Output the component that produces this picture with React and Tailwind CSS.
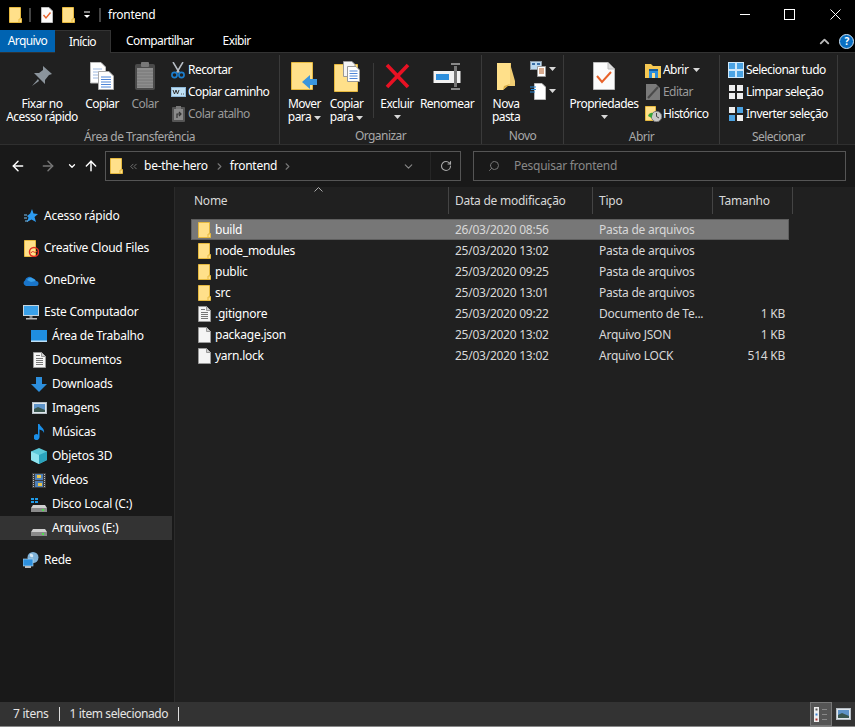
import { ChevronDown, ChevronUp, ChevronRight, ChevronsLeft, RotateCw, Search, ArrowLeft, ArrowRight, ArrowUp } from "lucide-react";

function Folder({ className = "w-[13px] h-[16px]" }) {
  return (
    <svg className={className} viewBox="0 0 13 16" preserveAspectRatio="none">
      <path d="M0.5 0.5H11.5V11.5H12.5V15.5H0.5Z" fill="#ffe08a" stroke="#e6b93f" />
      <path d="M10 15V12H12" fill="none" stroke="#e6b93f" />
    </svg>
  );
}

function Page({ lines }) {
  return (
    <svg className="w-[13px] h-[16px]" viewBox="0 0 13 16">
      <path d="M0.5 0.5H8.5L12.5 4.5V15.5H0.5Z" fill="#f5f5f5" stroke="#9a9a9a" />
      <path d="M8.5 0.5V4.5H12.5" fill="#cfcfcf" stroke="#9a9a9a" />
      {lines && <path d="M3 3.5H7M3 6.5H10M3 8.5H10M3 10.5H10M3 12.5H10" stroke="#777" />}
    </svg>
  );
}

function Caret({ className = "" }) {
  return (
    <svg className={`inline-block w-[7px] h-[4px] ${className}`} viewBox="0 0 7 4">
      <path d="M0 0H7L3.5 4Z" fill="#d8d8d8" />
    </svg>
  );
}

function PinIcon() {
  return (
    <svg width="24" height="24" viewBox="0 0 24 24">
      <path d="M13 2L22 10L19 11L15 16L15 20L4 9L9 9L13 6Z" fill="#8b949c" />
      <path d="M8 15L2 22L9 17Z" fill="#8b949c" />
    </svg>
  );
}

function CopyIcon() {
  return (
    <svg width="24" height="28" viewBox="0 0 24 28">
      <path d="M0.5 0.5H11L15.5 5V21H0.5Z" fill="#fff" stroke="#bbb" />
      <path d="M3 7H12M3 10H12M3 13H12M3 16H12" stroke="#9db8e0" />
      <path d="M8.5 9.5H19L23.5 14V27.5H8.5Z" fill="#fff" stroke="#aaa" />
      <path d="M11 15H21M11 17.5H21M11 20H21M11 22.5H21M11 25H21" stroke="#4f86d8" />
    </svg>
  );
}

function ClipboardIcon() {
  return (
    <svg width="20" height="28" viewBox="0 0 20 28">
      <rect x="0" y="2" width="20" height="26" rx="2" fill="#4a4a4a" />
      <rect x="2" y="6" width="16" height="20" fill="#8d8d8d" />
      <path d="M2 9H18M2 12H18M2 15H18M2 18H18M2 21H18M2 24H18" stroke="#777" />
      <rect x="6" y="0" width="8" height="5" rx="1" fill="#777" />
    </svg>
  );
}

function ScissorsIcon() {
  return (
    <svg width="14" height="17" viewBox="0 0 14 17">
      <path d="M2 0L8.5 11M12 0L5.5 11" stroke="#b8bec6" strokeWidth="1.5" />
      <circle cx="3.5" cy="13" r="2.6" fill="none" stroke="#1b7fd0" strokeWidth="1.6" />
      <circle cx="10.5" cy="13" r="2.6" fill="none" stroke="#1b7fd0" strokeWidth="1.6" />
    </svg>
  );
}

function PathIcon() {
  return (
    <svg width="15" height="10" viewBox="0 0 15 10">
      <rect x="0.5" y="0.5" width="14" height="9" fill="#bfe0f5" stroke="#8fb8d8" />
      <path d="M2 3L3.5 7L5 3L6.5 7L8 3M10 7H10.8M12 7H12.8" fill="none" stroke="#333" />
    </svg>
  );
}

function ShortcutIcon() {
  return (
    <svg width="13" height="16" viewBox="0 0 13 16">
      <rect x="0" y="1" width="13" height="15" rx="1" fill="#555" />
      <rect x="2" y="3" width="9" height="11" fill="#8a8a8a" />
      <rect x="4" y="0" width="5" height="3" fill="#777" />
      <path d="M5 12V8H9M7 6L9 8L7 10" fill="none" stroke="#333" strokeWidth="1.2" />
    </svg>
  );
}

function MoveIcon() {
  return (
    <svg width="27" height="28" viewBox="0 0 27 28">
      <path d="M0.5 0.5H21.5V27.5H0.5Z" fill="#ffe08a" stroke="#e6b93f" />
      <path d="M11 20L19 13V17H26V23H19V27Z" fill="#3a96dd" />
    </svg>
  );
}

function CopyToIcon() {
  return (
    <svg width="26" height="31" viewBox="0 0 26 31">
      <path d="M0.5 3.5H23.5V30.5H0.5Z" fill="#ffe08a" stroke="#e6b93f" />
      <path d="M9.5 0.5H18L21 3.5V15.5H9.5Z" fill="#f5f5f5" stroke="#999" />
      <path d="M13.5 5.5H22L25.5 9V20.5H13.5Z" fill="#fff" stroke="#999" />
      <path d="M15.5 10H23.5M15.5 12.5H23.5M15.5 15H23.5M15.5 17.5H23.5" stroke="#4f86d8" />
    </svg>
  );
}

function DeleteIcon() {
  return (
    <svg width="25" height="26" viewBox="0 0 25 26">
      <path d="M2 2L23 24M23 2L2 24" stroke="#e81123" strokeWidth="3.6" />
    </svg>
  );
}

function RenameIcon() {
  return (
    <svg width="29" height="27" viewBox="0 0 29 27">
      <rect x="0.5" y="8" width="27" height="12" fill="#f2f2f2" />
      <rect x="3" y="11" width="13" height="6" fill="#2d8fdd" />
      <rect x="21" y="3" width="3" height="21" fill="#777" />
      <path d="M18 1H27M18 26H27" stroke="#888" strokeWidth="2" />
    </svg>
  );
}

function NewFolderIcon() {
  return (
    <svg width="19" height="28" viewBox="0 0 19 28">
      <path d="M0 1H14V5L18 19V24H6L0 28Z" fill="#f0cc72" />
      <path d="M0 1H13V22L6 28H0Z" fill="#ffe08a" />
      <path d="M6 28L7 24L13 22" fill="#d8ac45" />
    </svg>
  );
}

function NewItemIcon() {
  return (
    <svg width="16" height="16" viewBox="0 0 16 16">
      <rect x="0.5" y="0.5" width="11" height="8" fill="#bcd9ef" stroke="#8a97a3" />
      <rect x="2" y="2" width="3" height="2" fill="#3a6ea5" />
      <rect x="7" y="2" width="3" height="2" fill="#3a6ea5" />
      <path d="M7.5 5.5H15.5V15.5H7.5Z" fill="#fff" stroke="#999" />
      <path d="M9 8H14M9 10H14M9 12H14" stroke="#b0561f" />
    </svg>
  );
}

function EasyAccessIcon() {
  return (
    <svg width="16" height="17" viewBox="0 0 16 17">
      <path d="M4.5 0.5H12L15.5 4V16.5H4.5Z" fill="#fff" stroke="#bbb" />
      <path d="M0 4H6M1 6.5H6M0 9H5" stroke="#2a8ad8" strokeWidth="1.2" />
    </svg>
  );
}

function PropsIcon() {
  return (
    <svg width="22" height="28" viewBox="0 0 22 28">
      <path d="M0.5 0.5H15L21.5 7V27.5H0.5Z" fill="#fbfbfb" stroke="#bbb" />
      <path d="M15 0.5V7H21.5" fill="#ddd" stroke="#bbb" />
      <path d="M4 14L9 20L18 10" fill="none" stroke="#e8622a" strokeWidth="2" />
    </svg>
  );
}

function PropsSmall() {
  return (
    <svg width="12" height="16" viewBox="0 0 12 16">
      <path d="M0.5 0.5H8L11.5 4V15.5H0.5Z" fill="#fbfbfb" stroke="#bbb" />
      <path d="M2.5 8L5 11L9.5 5.5" fill="none" stroke="#e8622a" strokeWidth="1.4" />
    </svg>
  );
}

function OpenIcon() {
  return (
    <svg width="16" height="15" viewBox="0 0 16 15">
      <path d="M0 1H6L8 3H16V15H0Z" fill="#f4c752" />
      <rect x="4" y="6" width="9" height="9" fill="#2d8fdd" />
      <rect x="4" y="6" width="9" height="2" fill="#155a9b" />
      <rect x="7" y="10" width="3" height="5" fill="#ffe08a" />
    </svg>
  );
}

function EditIcon() {
  return (
    <svg width="14" height="16" viewBox="0 0 14 16">
      <path d="M0 0H10L14 4V16H0Z" fill="#7a7a7a" />
      <path d="M2 14L12 3" stroke="#4a4a4a" strokeWidth="2" />
    </svg>
  );
}

function HistoryIcon() {
  return (
    <svg width="17" height="16" viewBox="0 0 17 16">
      <path d="M0.5 0.5H10.5V14.5H0.5Z" fill="#ffe08a" stroke="#e6b93f" />
      <circle cx="11.5" cy="10.5" r="5.2" fill="#c8c8c8" stroke="#777" />
      <path d="M11.5 7V10.5L14 12" fill="none" stroke="#444" />
      <path d="M3 10A4 4 0 0 1 8 7L6.5 12Z" fill="#3aa53a" />
    </svg>
  );
}

function GridIcon({ type }) {
  const on = "#4ba3e3";
  const off = "#eeeeee";
  const cells = {
    all: [on, on, on, on],
    none: [off, off, off, off],
    invert: [off, on, on, off],
  }[type];
  return (
    <svg width="16" height="16" viewBox="0 0 16 16">
      {type === "all" && <rect x="0" y="0" width="16" height="16" fill="#cfe8fa" />}
      <rect x="1" y="1" width="6" height="6" fill={cells[0]} />
      <rect x="9" y="1" width="6" height="6" fill={cells[1]} />
      <rect x="1" y="9" width="6" height="6" fill={cells[2]} />
      <rect x="9" y="9" width="6" height="6" fill={cells[3]} />
    </svg>
  );
}

function StarIcon() {
  return (
    <svg width="14" height="14" viewBox="0 0 14 14">
      <path d="M8 0L9.5 4.5L14 5L10.5 8L12 13L7.5 10.5L3 13L4.5 8.5L3 7L6.2 4.6Z" fill="#2d9bf0" />
      <path d="M0 6H3M0 9H3M1 12H4" stroke="#7cc4f5" />
    </svg>
  );
}

function CloudFilesIcon() {
  return (
    <svg width="15" height="17" viewBox="0 0 15 17">
      <path d="M0.5 0.5H11.5V16.5H0.5Z" fill="#ffe08a" stroke="#e6b93f" />
      <circle cx="10" cy="12" r="4.5" fill="none" stroke="#e02f26" strokeWidth="1.5" />
      <path d="M7 13C9 9 11 15 13 11" fill="none" stroke="#e02f26" />
    </svg>
  );
}

function OneDriveIcon() {
  return (
    <svg width="16" height="11" viewBox="0 0 16 11">
      <path d="M3 11A3 3 0 0 1 2 5.5A4.5 4.5 0 0 1 10 3.5A3.5 3.5 0 0 1 13 6A2.5 2.5 0 0 1 13 11Z" fill="#1a75c9" />
      <path d="M4 5A4.5 4.5 0 0 1 10 3.5A3.5 3.5 0 0 1 12.5 6L8 7Z" fill="#3aa0e8" />
    </svg>
  );
}

function PcIcon() {
  return (
    <svg width="16" height="15" viewBox="0 0 16 15">
      <rect x="0" y="0" width="16" height="11" fill="#c8d4dc" />
      <rect x="1" y="1" width="14" height="9" fill="#3aa0e8" />
      <rect x="6.5" y="11" width="3" height="2" fill="#888" />
      <rect x="3" y="13" width="11" height="1.5" fill="#bbb" />
    </svg>
  );
}

function DesktopIcon() {
  return (
    <svg width="16" height="12" viewBox="0 0 16 12">
      <rect x="0" y="0" width="16" height="12" fill="#1f8ee0" />
      <rect x="0" y="10.5" width="16" height="1.5" fill="#bfe0f5" />
    </svg>
  );
}

function DownloadIcon() {
  return (
    <svg width="16" height="15" viewBox="0 0 16 15">
      <path d="M5 0H11V7H16L8 15L0 7H5Z" fill="#2d8fdd" />
    </svg>
  );
}

function PicturesIcon() {
  return (
    <svg width="15" height="12" viewBox="0 0 15 12">
      <rect x="0.5" y="0.5" width="14" height="11" fill="#dfe6ec" stroke="#b5bdc4" />
      <rect x="2" y="2" width="11" height="8" fill="#5e93c8" />
      <path d="M2 7L6 5L13 8V10H2Z" fill="#39564f" />
    </svg>
  );
}

function MusicIcon() {
  return (
    <svg width="11" height="16" viewBox="0 0 11 16">
      <path d="M4 0H5.5C6 3 11 4 10 9C9.5 6.5 7 6 5.5 5.5V13A3 3 0 1 1 4 10.5Z" fill="#1a8fe8" />
    </svg>
  );
}

function ObjectsIcon() {
  return (
    <svg width="16" height="16" viewBox="0 0 16 16">
      <path d="M8 0L16 3.5V12L8 16L0 12V3.5Z" fill="#5cc8d8" />
      <path d="M0 3.5L8 7V16L0 12Z" fill="#8fe3ee" />
      <path d="M16 3.5L8 7V16L16 12Z" fill="#2ba3bd" />
    </svg>
  );
}

function VideosIcon() {
  return (
    <svg width="14" height="15" viewBox="0 0 14 15">
      <rect x="0" y="0" width="14" height="15" fill="#3c3c3c" />
      <rect x="3" y="1" width="8" height="6" fill="#4d7fb8" />
      <rect x="3" y="8" width="8" height="6" fill="#4d7fb8" />
      <rect x="5" y="2" width="4" height="3" fill="#e8c34a" />
      <rect x="6" y="10" width="4" height="3" fill="#e8c34a" />
      <path d="M1.5 1V14M12.5 1V14" stroke="#bbb" strokeDasharray="1 1" />
    </svg>
  );
}

function DiskIcon({ windows }) {
  return (
    <svg width="16" height="15" viewBox="0 0 16 15">
      {windows && <path d="M0 1H3V3H0ZM4 1H7V3H4ZM0 4H3V6H0ZM4 4H7V6H4Z" fill="#1f9be8" />}
      <path d="M2 8H14L16 11H0Z" fill="#d0d0d0" />
      <rect x="0" y="11" width="16" height="4" fill="#8a8a8a" />
      <rect x="11" y="12" width="2" height="2" fill="#4ade4a" />
    </svg>
  );
}

function NetworkIcon() {
  return (
    <svg width="16" height="16" viewBox="0 0 16 16">
      <circle cx="10" cy="5.5" r="5.5" fill="#7fb2d8" />
      <path d="M7 2C9 1 11 3 10 5C8 6 6 4 7 2Z" fill="#d5e8f5" />
      <rect x="0" y="7" width="10" height="7" fill="#2d8fdd" stroke="#bfe0f5" strokeWidth="0.6" />
      <rect x="2" y="14" width="6" height="2" fill="#bbb" />
    </svg>
  );
}

function LargeButton({ icon, lines, caret, disabled, width }) {
  return (
    <div className={`flex flex-col items-center ${width} ${disabled ? "text-[#9a9a9a]" : "text-white"}`}>
      <div className="h-[42px] flex items-center justify-center">{icon}</div>
      {lines.map((line, i) => (
        <div key={i} className="h-[13px] leading-[13px] whitespace-nowrap">
          {line}
          {caret && lines.length > 1 && i === lines.length - 1 && <Caret className="ml-[3px] align-middle" />}
        </div>
      ))}
      {caret && lines.length === 1 && (
        <div className="h-[13px] flex items-center">
          <Caret />
        </div>
      )}
    </div>
  );
}

function SmallButton({ icon, label, disabled, caret }) {
  return (
    <div className={`h-[22px] flex items-center whitespace-nowrap ${disabled ? "text-[#9a9a9a]" : "text-white"}`}>
      <div className="w-[18px] flex items-center justify-center mr-[1px]">{icon}</div>
      {label}
      {caret && <Caret className="ml-[5px]" />}
    </div>
  );
}

function RibbonGroup({ label, width, children }) {
  return (
    <div className={`${width} flex flex-col border-r border-[#3a3a3a] shrink-0`}>
      <div className="h-[73px] flex">{children}</div>
      <div className="text-center text-[#a8a8a8] mt-[4px] leading-[16px]">{label}</div>
    </div>
  );
}

function NavRow({ icon, label, child, active }) {
  return (
    <div className={`h-[24px] flex items-center ${active ? "bg-[#333333] w-[172px]" : ""} ${child ? "pl-[31px]" : "pl-[23px]"}`}>
      <div className="w-[16px] flex items-center justify-center shrink-0">{icon}</div>
      <span className="ml-[5px] text-white whitespace-nowrap">{label}</span>
    </div>
  );
}

const files = [
  { name: "build", date: "26/03/2020 08:56", type: "Pasta de arquivos", size: "", kind: "folder", selected: true },
  { name: "node_modules", date: "25/03/2020 13:02", type: "Pasta de arquivos", size: "", kind: "folder" },
  { name: "public", date: "25/03/2020 09:25", type: "Pasta de arquivos", size: "", kind: "folder" },
  { name: "src", date: "25/03/2020 13:01", type: "Pasta de arquivos", size: "", kind: "folder" },
  { name: ".gitignore", date: "25/03/2020 09:22", type: "Documento de Te...", size: "1 KB", kind: "text" },
  { name: "package.json", date: "25/03/2020 13:02", type: "Arquivo JSON", size: "1 KB", kind: "file" },
  { name: "yarn.lock", date: "25/03/2020 13:02", type: "Arquivo LOCK", size: "514 KB", kind: "file" },
];

export default function App() {
  return (
    <div className="w-[855px] h-[727px] flex flex-col overflow-hidden bg-[#202020] text-white text-[12px] tracking-[-0.25px] font-['Noto_Sans',sans-serif]">
      {/* title bar */}
      <div className="h-[30px] bg-black flex items-center shrink-0">
        <div className="ml-[9px]"><Folder /></div>
        <div className="ml-[7px] w-[2px] h-[14px] bg-[#444]"></div>
        <div className="ml-[10px]"><PropsSmall /></div>
        <div className="ml-[9px]"><Folder /></div>
        <svg className="ml-[8px]" width="8" height="8" viewBox="0 0 8 8">
          <path d="M1 1H7" stroke="#fff" />
          <path d="M1 4H7L4 7Z" fill="#fff" />
        </svg>
        <div className="ml-[8px] w-[2px] h-[14px] bg-[#444]"></div>
        <span className="ml-[7px] text-[12px]">frontend</span>
        <div className="ml-auto flex items-center pb-[2px]">
          <div className="w-[45px] flex justify-center">
            <svg width="10" height="10" viewBox="0 0 10 10"><path d="M0 5.5H10" stroke="#fff" /></svg>
          </div>
          <div className="w-[45px] flex justify-center">
            <svg width="11" height="11" viewBox="0 0 11 11"><rect x="0.5" y="0.5" width="10" height="10" fill="none" stroke="#fff" /></svg>
          </div>
          <div className="w-[43px] flex justify-start pl-[18px]">
            <svg width="11" height="11" viewBox="0 0 11 11"><path d="M0.5 0.5L10.5 10.5M10.5 0.5L0.5 10.5" stroke="#fff" /></svg>
          </div>
        </div>
      </div>

      {/* tabs */}
      <div className="h-[23px] bg-black flex items-stretch shrink-0 border-b border-[#333] tracking-[-0.6px]">
        <div className="w-[55px] bg-[#0063b1] flex items-center justify-center">Arquivo</div>
        <div className="w-[56px] h-[23px] bg-[#202020] border-t border-r border-[#333] flex items-center justify-center">Início</div>
        <div className="ml-[15px] flex items-center">Compartilhar</div>
        <div className="ml-[29px] flex items-center">Exibir</div>
        <div className="ml-auto flex items-center">
          <ChevronUp size={15} strokeWidth={3} className="text-[#bbb] mr-[7px]" />
          <div className="w-[15px] h-[15px] rounded-full bg-[#0a6fc2] border border-[#cfe4f5] flex items-center justify-center text-[10px] font-bold mr-[1px]">?</div>
        </div>
      </div>

      {/* ribbon */}
      <div className="h-[92px] flex bg-[#202020] pt-[2px] shrink-0 border-b border-[#2f2f2f] tracking-[-0.55px]">
        <RibbonGroup label="Área de Transferência" width="w-[280px]">
          <div className="w-[3px]"></div>
          <LargeButton width="w-[78px]" icon={<PinIcon />} lines={["Fixar no", "Acesso rápido"]} />
          <LargeButton width="w-[42px]" icon={<CopyIcon />} lines={["Copiar"]} />
          <LargeButton width="w-[44px]" icon={<ClipboardIcon />} lines={["Colar"]} disabled />
          <div className="ml-[2px] pt-[4px]">
            <SmallButton icon={<ScissorsIcon />} label="Recortar" />
            <SmallButton icon={<PathIcon />} label="Copiar caminho" />
            <SmallButton icon={<ShortcutIcon />} label="Colar atalho" disabled />
          </div>
        </RibbonGroup>
        <RibbonGroup label="Organizar" width="w-[202px]">
          <div className="w-[4px]"></div>
          <LargeButton width="w-[41px]" icon={<MoveIcon />} lines={["Mover", "para"]} caret />
          <LargeButton width="w-[43px]" icon={<CopyToIcon />} lines={["Copiar", "para"]} caret />
          <div className="ml-[5px] mt-[8px] mb-[6px] border-l border-[#3a3a3a]"></div>
          <LargeButton width="w-[46px]" icon={<DeleteIcon />} lines={["Excluir"]} caret />
          <LargeButton width="w-[54px]" icon={<RenameIcon />} lines={["Renomear"]} />
        </RibbonGroup>
        <RibbonGroup label="Novo" width="w-[82px]">
          <LargeButton width="w-[48px]" icon={<NewFolderIcon />} lines={["Nova", "pasta"]} />
          <div className="pt-[3px] flex flex-col">
            <div className="h-[22px] flex items-center gap-[3px]"><NewItemIcon /><Caret /></div>
            <div className="h-[22px] flex items-center gap-[3px]"><EasyAccessIcon /><Caret /></div>
          </div>
        </RibbonGroup>
        <RibbonGroup label="Abrir" width="w-[156px]">
          <LargeButton width="w-[80px]" icon={<PropsIcon />} lines={["Propriedades"]} caret />
          <div className="pt-[4px]">
            <SmallButton icon={<OpenIcon />} label="Abrir" caret />
            <SmallButton icon={<EditIcon />} label="Editar" disabled />
            <SmallButton icon={<HistoryIcon />} label="Histórico" />
          </div>
        </RibbonGroup>
        <RibbonGroup label="Selecionar" width="w-[118px]">
          <div className="pl-[7px] pt-[4px]">
            <SmallButton icon={<GridIcon type="all" />} label="Selecionar tudo" />
            <SmallButton icon={<GridIcon type="none" />} label="Limpar seleção" />
            <SmallButton icon={<GridIcon type="invert" />} label="Inverter seleção" />
          </div>
        </RibbonGroup>
      </div>

      {/* address row */}
      <div className="h-[42px] bg-[#191919] flex items-center shrink-0">
        <ArrowLeft size={16} strokeWidth={2.2} className="ml-[10px]" />
        <ArrowRight size={16} strokeWidth={2.2} className="ml-[14px] text-[#777]" />
        <ChevronDown size={10} strokeWidth={3} className="ml-[11px]" />
        <ArrowUp size={16} strokeWidth={2.2} className="ml-[6px]" />
        <div className="ml-[6px] w-[356px] h-[30px] border border-[#555] flex items-center">
          <div className="ml-[4px]"><Folder className="w-[13px] h-[16px]" /></div>
          <ChevronsLeft size={11} className="ml-[5px] text-[#777]" />
          <span className="ml-[5px]">be-the-hero</span>
          <ChevronRight size={11} strokeWidth={2.5} className="ml-[6px] text-[#777]" />
          <span className="ml-[5px]">frontend</span>
          <ChevronRight size={11} strokeWidth={2.5} className="ml-[5px] text-[#777]" />
          <ChevronDown size={13} strokeWidth={2} className="ml-auto mr-[15px] text-[#888]" />
          <div className="w-[30px] h-full border-l border-[#262626] flex items-center justify-center">
            <RotateCw size={12} strokeWidth={2.2} className="text-[#aaa]" />
          </div>
        </div>
        <div className="ml-[12px] w-[373px] h-[30px] border border-[#555] flex items-center">
          <Search size={12} className="ml-[14px] text-[#777] -scale-x-100" />
          <span className="ml-[14px] text-[#888]">Pesquisar frontend</span>
        </div>
      </div>

      {/* content */}
      <div className="flex-1 flex min-h-0">
        <div className="w-[175px] shrink-0 bg-[#191919] border-r border-[#2b2b2b] pt-[17px] flex flex-col">
          <NavRow icon={<StarIcon />} label="Acesso rápido" />
          <div className="mt-[8px]"><NavRow icon={<CloudFilesIcon />} label="Creative Cloud Files" /></div>
          <div className="mt-[8px]"><NavRow icon={<OneDriveIcon />} label="OneDrive" /></div>
          <div className="mt-[8px]"><NavRow icon={<PcIcon />} label="Este Computador" /></div>
          <NavRow child icon={<DesktopIcon />} label="Área de Trabalho" />
          <NavRow child icon={<Page lines />} label="Documentos" />
          <NavRow child icon={<DownloadIcon />} label="Downloads" />
          <NavRow child icon={<PicturesIcon />} label="Imagens" />
          <NavRow child icon={<MusicIcon />} label="Músicas" />
          <NavRow child icon={<ObjectsIcon />} label="Objetos 3D" />
          <NavRow child icon={<VideosIcon />} label="Vídeos" />
          <NavRow child icon={<DiskIcon windows />} label="Disco Local (C:)" />
          <NavRow child active icon={<DiskIcon />} label="Arquivos (E:)" />
          <div className="mt-[8px]"><NavRow icon={<NetworkIcon />} label="Rede" /></div>
        </div>

        <div className="flex-1 flex flex-col bg-[#202020] min-w-0">
          <div className="h-[27px] flex items-stretch text-[#d8d8d8] relative">
            <svg className="absolute left-[139px] top-0" width="9" height="5" viewBox="0 0 9 5">
              <path d="M0.5 4.5L4.5 0.5L8.5 4.5" fill="none" stroke="#aaa" />
            </svg>
            <div className="w-[274px] pl-[19px] flex items-center border-r border-[#444]">Nome</div>
            <div className="w-[144px] pl-[6px] flex items-center border-r border-[#444]">Data de modificação</div>
            <div className="w-[120px] pl-[6px] flex items-center border-r border-[#444]">Tipo</div>
            <div className="w-[80px] pl-[6px] flex items-center border-r border-[#444]">Tamanho</div>
          </div>
          <div className="pt-[5px] pl-[16px]">
            {files.map((f) => (
              <div
                key={f.name}
                className={`w-[598px] h-[21px] flex items-center ${
                  f.selected ? "bg-[#777777] border border-[#5f5f5f]" : ""
                }`}
              >
                <div className={`${f.selected ? "pl-[6px] w-[23px]" : "pl-[7px] w-[24px]"} shrink-0 flex items-center`}>
                  {f.kind === "folder" ? <Folder /> : <Page lines={f.kind === "text"} />}
                </div>
                <div className="w-[240px] shrink-0 text-white whitespace-nowrap">{f.name}</div>
                <div className="w-[144px] shrink-0 whitespace-nowrap text-[#d8d8d8]">{f.date}</div>
                <div className="w-[120px] shrink-0 whitespace-nowrap text-[#d8d8d8]">{f.type}</div>
                <div className="w-[66px] shrink-0 text-right text-[#d8d8d8] whitespace-nowrap">{f.size}</div>
              </div>
            ))}
          </div>
        </div>
      </div>

      {/* status bar */}
      <div className="h-[25px] bg-[#333333] border-b border-[#888] flex items-center shrink-0">
        <span className="ml-[13px] text-[#e5e5e5]">7 itens</span>
        <div className="ml-[10px] w-px h-[14px] bg-[#ddd]"></div>
        <span className="ml-[10px] text-[#e5e5e5] tracking-[-0.4px]">1 item selecionado</span>
        <div className="ml-[10px] w-px h-[14px] bg-[#ddd]"></div>
        <div className="ml-auto w-[22px] h-full bg-[#555] border border-[#777] flex items-center justify-center">
          <svg width="14" height="15" viewBox="0 0 14 15">
            <rect x="0" y="0" width="5" height="15" fill="#eee" />
            <rect x="1.5" y="1.5" width="2" height="2" fill="#555" />
            <rect x="1.5" y="6.5" width="2" height="2" fill="#3a7fd0" />
            <rect x="1.5" y="11.5" width="2" height="2" fill="#b03030" />
            <path d="M8 2.5H13M8 7.5H13M8 12.5H13" stroke="#888" />
          </svg>
        </div>
        <div className="ml-[4px] mr-[4px]"><PicturesIcon /></div>
      </div>
    </div>
  );
}
